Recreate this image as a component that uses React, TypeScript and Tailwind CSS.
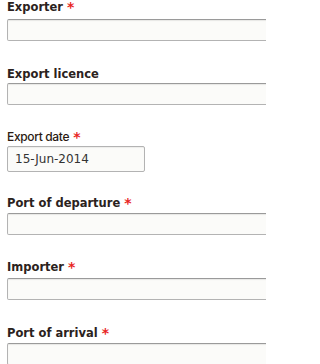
import React from 'react';

interface FieldProps {
  label: string;
  required?: boolean;
  top: string;
  gap: string;
  children: React.ReactNode;
}

function Star() {
  return (
    <span className="ml-[4px] inline-block align-top font-['DejaVu_Sans',sans-serif] text-[14px] font-bold leading-[14px] text-[#e8251f]">
      *
    </span>
  );
}

function Field({ label, required, top, gap, children }: FieldProps) {
  return (
    <div className={top}>
      <label className={`block h-[14px] font-['DejaVu_Sans',sans-serif] text-[11.5px] font-bold leading-[14px] text-[#2b2220] ${gap}`}>
        {label}
        {required && <Star />}
      </label>
      {children}
    </div>
  );
}

function TextBox() {
  return (
    <div className="h-[22px] w-[300px] rounded-[2px] border border-[#b3b3b3] border-t-[#9a9a9a] bg-[#fbfbf9] shadow-[inset_0_1px_1px_rgba(0,0,0,0.08)]" />
  );
}

export default function App() {
  return (
    <div className="h-[364px] w-[266px] overflow-hidden bg-white pl-[7px]">
      <Field label="Exporter" required top="mt-0" gap="mb-[5px]">
        <TextBox />
      </Field>

      <Field label="Export licence" top="mt-[26px]" gap="mb-[2px]">
        <TextBox />
      </Field>

      {/* Date field uses the lighter form font */}
      <div className="mt-[25px]">
        <label className="block h-[14px] font-['Inter',sans-serif] text-[12px] font-medium leading-[14px] tracking-[-0.35px] text-[#2b1a12]">
          Export date
          <Star />
        </label>
        <div className="mt-[2px] flex h-[26px] w-[138px] items-center rounded-[2px] border border-[#b3b3b3] bg-[#fbfbf9] pl-[7px] font-['DejaVu_Sans',sans-serif] text-[12px] text-[#333333] shadow-[inset_0_1px_1px_rgba(0,0,0,0.06)]">
          15-Jun-2014
        </div>
      </div>

      <Field label="Port of departure" required top="mt-[24px]" gap="mb-[3px]">
        <TextBox />
      </Field>

      <Field label="Importer" required top="mt-[25px]" gap="mb-[4px]">
        <TextBox />
      </Field>

      <Field label="Port of arrival" required top="mt-[26px]" gap="mb-[3px]">
        <TextBox />
      </Field>
    </div>
  );
}
